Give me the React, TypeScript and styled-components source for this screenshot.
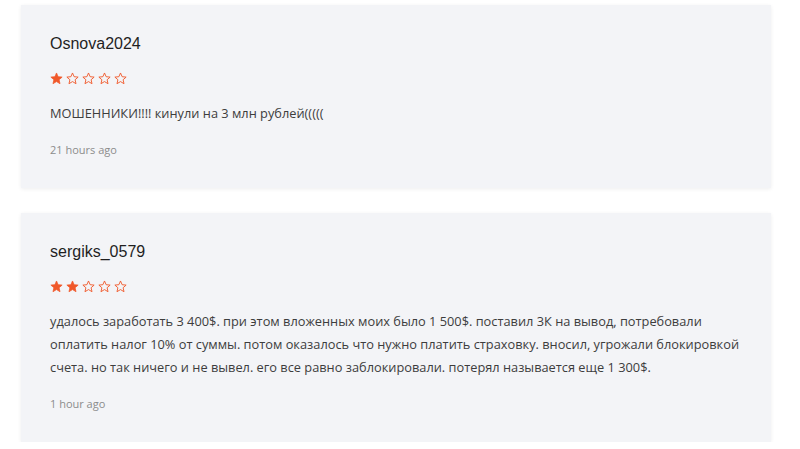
import React from 'react';
import styled, { createGlobalStyle } from 'styled-components';

const GlobalStyle = createGlobalStyle`
  html, body {
    margin: 0;
    padding: 0;
    background: #ffffff;
  }
`;

const Page = styled.div`
  display: flex;
  flex-direction: column;
  gap: 25px;
  padding: 5px 29px 0 21px;
  width: 800px;
  box-sizing: border-box;
`;

const Card = styled.div`
  display: flex;
  flex-direction: column;
  background: #f3f4f7;
  box-shadow: 0 1px 4px rgba(0, 0, 0, 0.07);
  padding: 29px 15px 29px 29px;
`;

const Author = styled.div`
  font-family: 'Liberation Sans', Arial, sans-serif;
  font-size: 16px;
  line-height: 20px;
  color: #1f1f1f;
`;

const Stars = styled.div`
  display: flex;
  gap: 3px;
  height: 13px;
  margin-top: 18px;
`;

const Text = styled.p`
  margin: 17px 0 0;
  font-family: 'Open Sans', sans-serif;
  font-size: 12.8px;
  line-height: 23px;
  color: #3d3d3d;
`;

const Time = styled.div`
  margin-top: 16px;
  font-family: 'Open Sans', sans-serif;
  font-size: 11px;
  line-height: 18px;
  color: #8c8c8c;
`;

const Star = ({ filled }: { filled: boolean }) => (
  <svg width="13" height="13" viewBox="0 0 24 24">
    <path
      d="M12 1.8l3 6.9 7.4.7-5.6 4.9 1.7 7.3L12 17.7l-6.5 3.9 1.7-7.3-5.6-4.9 7.4-.7z"
      fill={filled ? '#f0582a' : 'none'}
      stroke="#f0582a"
      strokeWidth={filled ? 1.4 : 1.7}
      strokeLinejoin="round"
    />
  </svg>
);

type Review = { author: string; rating: number; text: string; time: string };

const reviews: Review[] = [
  {
    author: 'Osnova2024',
    rating: 1,
    text: 'МОШЕННИКИ!!!! кинули на 3 млн рублей(((((',
    time: '21 hours ago',
  },
  {
    author: 'sergiks_0579',
    rating: 2,
    text:
      'удалось заработать 3 400$. при этом вложенных моих было 1 500$. поставил 3К на вывод, потребовали оплатить налог 10% от суммы. потом оказалось что нужно платить страховку. вносил, угрожали блокировкой счета. но так ничего и не вывел. его все равно заблокировали. потерял называется еще 1 300$.',
    time: '1 hour ago',
  },
];

export default function App() {
  return (
    <>
      <GlobalStyle />
      <Page>
        {reviews.map(r => (
          <Card key={r.author}>
            <Author>{r.author}</Author>
            <Stars>
              {[1, 2, 3, 4, 5].map(i => (
                <Star key={i} filled={i <= r.rating} />
              ))}
            </Stars>
            <Text>{r.text}</Text>
            <Time>{r.time}</Time>
          </Card>
        ))}
      </Page>
    </>
  );
}
